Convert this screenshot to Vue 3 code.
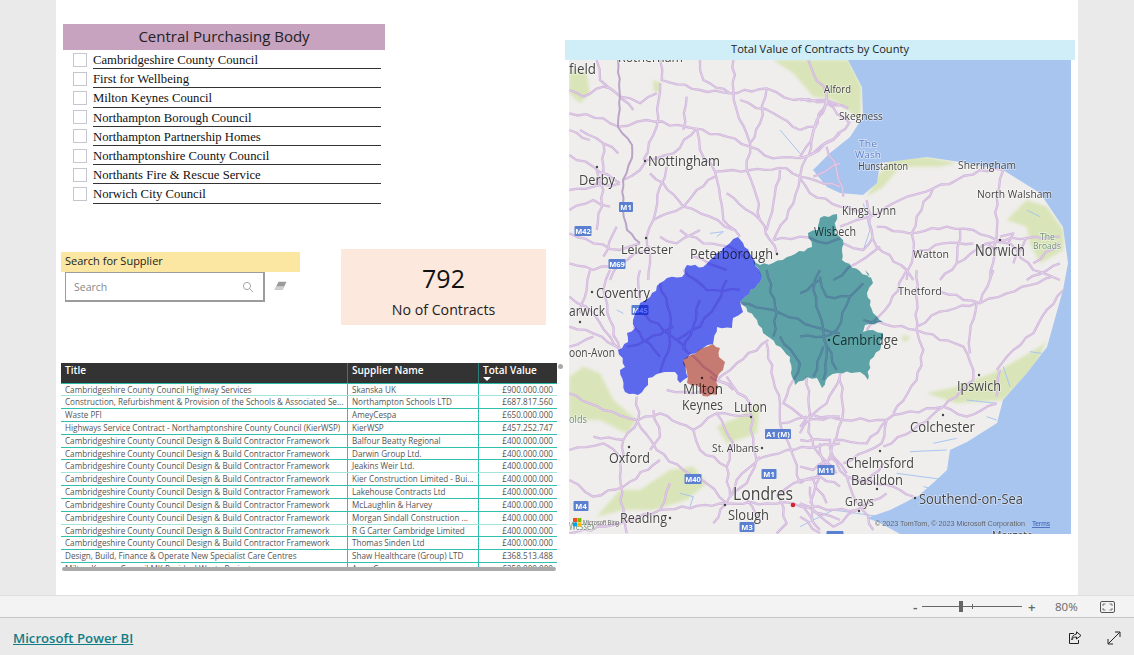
<template>
  <div class="app">
    <div class="stage">
      <main class="canvas">
        <div class="left">
          <section class="slicer">
            <h2 class="slicer-title">Central Purchasing Body</h2>
            <div v-for="body in bodies" :key="body" class="slicer-row">
              <span class="check"></span>
              <span class="slicer-label">{{ body }}</span>
            </div>
          </section>

          <div class="filters">
            <section class="search">
              <div class="search-title">Search for Supplier</div>
              <div class="search-row">
                <div class="search-box">
                  <span>Search</span>
                  <svg width="12" height="12" viewBox="0 0 12 12" fill="none" stroke="#a6a6a6">
                    <circle cx="5" cy="5" r="3.6" />
                    <path d="M7.6 7.6 11 11" />
                  </svg>
                </div>
                <svg class="eraser" width="13" height="10" viewBox="0 0 13 10">
                  <path d="M4.5.8h8L8.6 8.8H.6z" fill="#9a9a9a" />
                  <path d="M2.4 5.2h8L8.6 8.8H.6z" fill="#d0d0d0" />
                </svg>
              </div>
            </section>
            <section class="card">
              <div class="card-value">792</div>
              <div class="card-label">No of Contracts</div>
            </section>
          </div>

          <section class="table">
            <div class="thead">
              <div class="th">Title</div>
              <div class="th">Supplier Name</div>
              <div class="th sorted">Total Value<i class="sort"></i></div>
            </div>
            <div class="tbody">
              <div v-for="(row, i) in rows" :key="i" class="tr" :class="{ pale: i === 0 || i === 6 || i === 10 }">
                <div class="td">{{ row[0] }}</div>
                <div class="td">{{ row[1] }}</div>
                <div class="td num">{{ row[2] }}</div>
              </div>
            </div>
            <div class="scrollbar"></div>
            <i class="grip"></i>
          </section>
        </div>

        <div class="right">
          <div class="map-title">Total Value of Contracts by County</div>
          <svg class="map" width="502" height="474" viewBox="569 60 502 474">
            <defs>
              <filter id="soft" x="0" y="0" width="100%" height="100%">
                <feGaussianBlur stdDeviation="0.3" />
              </filter>
              <filter id="softer" x="-5%" y="-5%" width="110%" height="110%">
                <feGaussianBlur stdDeviation="1.6" />
              </filter>
            </defs>
            <rect x="569" y="60" width="502" height="474" fill="#efeeec" />
            <g filter="url(#softer)">
              <g v-for="group in layers" :key="group.id" :transform="place(group.origin)">
                <polygon v-for="p in group.green" :key="p" :points="p" fill="#d9e4b8" />
              </g>
            </g>
            <g filter="url(#soft)">
              <polygon :points="sea" fill="#a8c5f0" />
              <g v-for="group in layers" :key="group.id + 'w'" :transform="place(group.origin)">
                <polyline v-for="w in group.water" :key="w" :points="w" class="water" />
              </g>
              <g v-for="group in layers" :key="group.id + 'c'" :transform="place(group.origin)">
                <polyline v-for="r in group.roads" :key="r" :points="wavy(r)" class="road" />
              </g>
              <g v-for="group in layers" :key="group.id + 'i'" :transform="place(group.origin)">
                <polyline v-for="r in group.roads" :key="r" :points="wavy(r)" class="road-inner" />
              </g>
              <polyline class="motorway" :points="wavy(motorway, 0.8, 6)" />
            </g>

            <g v-for="s in shields" :key="s[0] + s[1]">
              <rect :x="s[1] - s[3] / 2" :y="s[2] - 5" :width="s[3]" height="10" rx="1" fill="#5b80d2" />
              <text :x="s[1]" :y="s[2] + 3" class="shield">{{ s[0] }}</text>
            </g>

            <circle v-for="d in dots" :key="d[0] + '-' + d[1]" :cx="d[0]" :cy="d[1]" r="1.2" fill="#444" />
            <text
              v-for="l in labels"
              :key="l[0] + l[1]"
              :x="l[1]"
              :y="l[2]"
              :font-size="l[3]"
              :textLength="l[4]"
              :fill="l[5] || '#444'"
              lengthAdjust="spacingAndGlyphs"
              class="place"
            >{{ l[0] }}</text>
            <circle cx="793" cy="505" r="2.3" fill="#d0262c" />

            <polygon :points="jag(northants)" class="region" fill="#6270ff" />
            <polygon :points="jag(cambs)" class="region" fill="#62aeb3" />
            <polygon :points="jag(keynes)" class="region" fill="#d3847b" />

            <g>
              <rect x="573" y="518" width="4" height="4" fill="#f25022" />
              <rect x="577.4" y="518" width="4" height="4" fill="#7fba00" />
              <rect x="573" y="522.4" width="4" height="4" fill="#00a4ef" />
              <rect x="577.4" y="522.4" width="4" height="4" fill="#ffb900" />
              <text x="583" y="525" class="credit" textLength="36" lengthAdjust="spacingAndGlyphs">Microsoft Bing</text>
            </g>
            <text x="875" y="526" class="credit" textLength="150" lengthAdjust="spacingAndGlyphs">© 2023 TomTom, © 2023 Microsoft Corporation</text>
            <text x="1032" y="526" class="credit terms" textLength="18" lengthAdjust="spacingAndGlyphs">Terms</text>
          </svg>
        </div>
      </main>
    </div>

    <div class="zoombar">
      <span class="zoom-sign">-</span>
      <div class="slider"><i class="tick"></i><i class="thumb"></i></div>
      <span class="zoom-sign plus">+</span>
      <span class="zoom-value">80%</span>
      <svg class="fit" width="15" height="12" viewBox="0 0 15 12" fill="none" stroke="#555">
        <rect x=".5" y=".5" width="14" height="11" rx="1.5" />
        <path d="M3 5V3h2.5M12 5V3H9.5M3 7v2h2.5M12 7v2H9.5" stroke-width=".8" />
      </svg>
    </div>

    <footer class="footer">
      <a class="brand">Microsoft Power BI</a>
      <div class="actions">
        <svg width="14" height="14" viewBox="0 0 14 14" fill="none" stroke="#222">
          <path d="M6 2.5H1.5v10h9V9" />
          <path d="M8.5.8 13 4.5 8.5 8V6C6 6 4.5 7 3.8 9 3.8 6 5.5 3.3 8.5 3z" />
        </svg>
        <svg width="14" height="14" viewBox="0 0 14 14" fill="none" stroke="#222">
          <path d="M1.5 12.5 12.5 1.5M8 1h5v5M1 8v5h5" />
        </svg>
      </div>
    </footer>
  </div>
</template>

<script setup>
const bodies = [
  'Cambridgeshire County Council',
  'First for Wellbeing',
  'Milton Keynes Council',
  'Northampton Borough Council',
  'Northampton Partnership Homes',
  'Northamptonshire County Council',
  'Northants Fire & Rescue Service',
  'Norwich City Council'
]

const framework = 'Cambridgeshire County Council Design & Build Contractor Framework'
const rows = [
  ['Cambridgeshire County Council Highway Services', 'Skanska UK', '£900.000.000'],
  ['Construction, Refurbishment & Provision of the Schools & Associated Se...', 'Northampton Schools LTD', '£687.817.560'],
  ['Waste PFI', 'AmeyCespa', '£650.000.000'],
  ['Highways Service Contract - Northamptonshire County Council (KierWSP)', 'KierWSP', '£457.252.747'],
  [framework, 'Balfour Beatty Regional', '£400.000.000'],
  [framework, 'Darwin Group Ltd.', '£400.000.000'],
  [framework, 'Jeakins Weir Ltd.', '£400.000.000'],
  [framework, 'Kier Construction Limited - Bui...', '£400.000.000'],
  [framework, 'Lakehouse Contracts Ltd', '£400.000.000'],
  [framework, 'McLaughlin & Harvey', '£400.000.000'],
  [framework, 'Morgan Sindall Construction ...', '£400.000.000'],
  [framework, 'R G Carter Cambridge Limited', '£400.000.000'],
  [framework, 'Thomas Sinden Ltd', '£400.000.000'],
  ['Design, Build, Finance & Operate New Specialist Care Centres', 'Shaw Healthcare (Group) LTD', '£368.513.488'],
  ['Milton Keynes Council MK Residual Waste Project', 'AmeyCespa', '£350.000.000']
]

// map traced in 3x crop coordinates, one group per crop
const place = ([x, y]) => `translate(${x} ${y}) scale(${1 / 3})`

// splits each edge and pushes the new points sideways, so traced lines don't look ruled
const bend = (str, step, amp) => {
  const pts = str.split(' ').map((p) => p.split(',').map(Number))
  const out = []
  pts.forEach(([x, y], i) => {
    out.push(`${x},${y}`)
    if (i === pts.length - 1) return
    const [nx, ny] = pts[i + 1]
    const len = Math.hypot(nx - x, ny - y)
    const n = Math.floor(len / step)
    for (let k = 1; k < n; k++) {
      const t = k / n
      const off = Math.sin((x + y) * 0.7 + k * 2.4) * amp * Math.sin(t * Math.PI)
      out.push(`${(x + (nx - x) * t - ((ny - y) / len) * off).toFixed(1)},${(y + (ny - y) * t + ((nx - x) / len) * off).toFixed(1)}`)
    }
  })
  return out.join(' ')
}
const wavy = (str, amp = 5, step = 22) => bend(str, step, amp)
const jag = (str) => {
  const closed = `${str} ${str.split(' ')[0]}`
  return bend(closed, 4, 1.3)
}

const motorway = '618,60 620,97 618,127 632,145 632,158 623,180 623,210 627,230 640,243'

const layers = [
  {
    id: 'nw',
    origin: [560, 30],
    green: [
      '28,120 80,130 90,190 60,220 28,190',
      '640,90 840,90 840,210 760,200 700,130',
      '280,150 305,160 295,190 280,180'
    ],
    water: ['450,610 490,605 470,620', '660,300 720,370'],
    roads: [
      '110,90 120,150 170,190 220,240',
      '28,375 100,410 180,460',
      '28,250 130,265 175,290 260,270 400,295 500,320 570,350 640,385 740,380 840,310',
      '300,90 305,150 420,180 510,190 620,175 700,210 800,210 840,225',
      '420,90 430,150 510,190',
      '520,90 520,180 530,240 570,340 560,420 590,500 600,570 630,630 650,670',
      '300,160 290,290 250,390',
      '410,295 340,370 260,390 240,420 190,450',
      '410,295 420,360 465,425 480,500 490,570 540,620',
      '465,425 570,420 680,415 720,440 840,470',
      '270,430 310,460 370,530 450,560 520,600',
      '320,410 300,470 280,570 260,620',
      '465,440 410,480 370,530 280,570',
      '740,380 720,440 700,520 640,630',
      '28,480 100,470 180,460',
      '28,610 100,640 180,660 240,640',
      '260,620 270,700 265,750',
      '130,340 130,430 100,470',
      '28,700 100,720 180,700 270,650',
      '640,630 720,620 800,640 840,625',
      '800,210 760,300 745,380',
      '110,420 130,480 110,600',
      '150,750 180,700',
      '28,180 70,200 130,170 170,190',
      '360,600 430,640 510,650 560,690',
      '400,680 500,720',
      '180,200 240,220 290,190',
      '60,300 130,340 175,370',
      '28,300 90,330',
      '380,200 370,300',
      '620,175 600,280 570,340',
      '660,420 640,520 620,600',
      '500,490 600,570',
      '760,440 840,400',
      '420,600 350,640 300,620',
      '170,590 130,680',
      '540,210 640,250 720,300',
      '28,540 100,510 150,530'
    ]
  },
  {
    id: 'ne',
    origin: [800, 30],
    green: [
      '40,90 145,90 185,170 180,270 130,230 70,190',
      '200,500 240,430 270,385 380,380 470,400 420,410 300,410 250,470',
      '620,570 680,510 740,530 790,600 790,660 720,700 690,640 680,590'
    ],
    water: ['190,520 210,600 190,660', '680,540 720,560'],
    roads: [
      '25,90 40,130 80,190 80,220 150,280',
      '0,210 80,215 145,235',
      '80,220 50,270 35,330 0,380',
      '150,275 100,330 30,375 0,385',
      '0,445 30,490 120,530 190,545',
      '200,510 215,600 230,650 320,720 340,750',
      '120,590 170,570 210,560 300,510 400,475 470,450 540,420 610,420',
      '400,475 350,560 335,610 340,670 320,750',
      '230,590 330,610 440,590 520,600 590,630 680,625 780,620',
      '610,420 590,500 590,620 570,750',
      '130,640 190,660 220,620',
      '600,620 640,610 625,640 560,640 590,660',
      '560,640 470,700 420,750',
      '630,640 700,720 780,750',
      '680,750 780,700',
      '640,700 680,620',
      '340,670 430,640 520,640',
      '240,650 170,700 100,750',
      '480,600 470,700',
      '700,700 780,640',
      '0,300 50,290',
      '80,350 110,420 130,500'
    ]
  },
  {
    id: 'sw',
    origin: [560, 270],
    green: [
      '28,320 70,290 120,310 160,390 230,450 200,490 120,450 28,450',
      '240,660 330,600 400,590 440,640 380,690 280,720 190,720 110,740 180,660',
      '470,470 540,440 600,400 590,490 500,520'
    ],
    water: ['360,670 400,680 390,710', '170,120 190,130'],
    roads: [
      '28,80 100,130 150,200 180,240',
      '28,370 130,420 230,450 290,540 370,600 440,640 500,700',
      '230,380 235,450 190,510 180,620 190,740 200,790',
      '235,450 300,430 400,480 470,430 580,440',
      '400,480 420,540 500,590 510,680 460,760',
      '500,320 520,350 570,400 580,530 590,570',
      '625,210 530,280 470,330',
      '620,220 640,330 660,400 660,460 700,560',
      '700,330 670,400 740,450 840,440',
      '740,440 760,530 830,610',
      '450,320 520,350 570,400',
      '28,630 100,680 190,650 300,570',
      '28,790 180,760 300,720 500,700 620,700 700,700 840,750',
      '590,570 680,540 840,520',
      '600,560 530,630 510,680',
      '650,680 700,640 780,620 840,650',
      '660,690 680,760 650,790',
      '720,700 780,780',
      '150,0 130,60 150,150 180,240',
      '240,0 235,50 240,90',
      '90,0 80,60 60,130',
      '28,170 100,190 170,230',
      '320,360 400,370 450,350',
      '28,230 100,200',
      '280,420 300,500 270,540',
      '470,430 520,520 500,590',
      '330,640 300,720',
      '100,500 190,510',
      '590,570 560,640 510,680',
      '660,460 740,440',
      '700,560 720,640',
      '780,520 790,600',
      '28,540 130,520 180,560',
      '840,320 800,400 740,450',
      '560,690 600,750',
      '760,630 800,700',
      // inside the county shapes
      '235,120 350,210 430,290 520,360',
      '300,40 330,130 330,220 300,310',
      '420,90 400,170 370,240',
      '500,30 470,100 420,170 350,210',
      '220,170 300,260',
      '540,60 440,60 370,0',
      '200,230 260,210 340,170',
      '620,0 650,130 640,200',
      '540,100 640,120 760,170 840,190',
      '780,0 760,60 790,180 800,260 790,330',
      '660,200 720,280 700,330',
      '790,230 760,320'
    ]
  },
  {
    id: 'se',
    origin: [800, 270],
    green: [
      '380,370 470,350 600,300 720,230 740,210 700,300 610,390 470,400',
      '310,195 330,200 320,215 305,210'
    ],
    water: [
      '500,390 590,400',
      '610,290 630,350',
      '690,245 725,250',
      '560,440 590,450',
      '330,545 440,540',
      '400,520 470,505',
      '0,770 100,720 240,740 350,680',
      '290,610 440,630',
      '370,650 420,660'
    ],
    roads: [
      '320,0 270,100 200,180',
      '190,150 350,180 490,230 520,300 520,330',
      '350,0 350,180 370,240 350,330 280,430',
      '420,65 540,100 620,70 760,20',
      '350,170 420,125 530,100 510,190 510,250',
      '540,100 580,0',
      '590,300 640,240 700,190 740,120 790,60',
      '520,330 430,410 280,435 260,450 130,450 40,435 0,470',
      '430,410 500,440 590,400',
      '260,450 245,520 130,580',
      '250,530 340,480 430,410',
      '120,310 130,420 110,500 90,560 140,620 170,700',
      '20,320 30,430 0,490',
      '0,510 90,510 100,560 140,610',
      '140,620 280,650 340,680',
      '0,640 50,620 90,560',
      '0,700 80,720 170,720 260,670',
      '30,650 40,760',
      '0,740 60,790',
      '590,380 600,300',
      '100,560 40,600 0,590',
      '260,450 200,520 100,510',
      '250,580 200,640 140,620',
      '60,620 30,700',
      '40,720 100,770 170,720',
      '180,700 220,780',
      // inside Cambridgeshire
      '0,200 70,200 110,300',
      '60,20 80,80 150,80 190,40',
      '0,70 60,30',
      '150,80 110,180 70,200'
    ]
  }
]

const sea = '848,60 862,87 863,117 850,137 830,153 813,170 827,187 840,193 863,195 877,183 880,163 927,157 960,162 1003,170 1040,193 1063,227 1068,263 1063,290 1047,347 1027,373 1003,400 997,423 967,442 950,450 947,470 933,483 917,497 890,510 867,518 880,523 900,534 1071,534 1071,60'
const northants = '738,237 743,243 752,257 762,277 760,282 740,302 743,312 733,318 732,328 717,327 713,344 703,348 683,360 688,377 680,383 675,372 660,373 648,378 648,385 638,395 625,392 620,370 625,367 618,350 628,342 627,333 635,328 633,320 640,303 650,297 660,283 667,278 682,277 687,265 703,267 710,260 730,243'
const cambs = '837,214 820,218 818,230 808,233 812,247 787,257 773,263 760,265 753,260 762,277 760,282 740,302 757,320 763,333 770,338 790,357 792,377 795,385 807,377 817,378 822,388 828,377 838,373 860,372 868,380 870,360 880,350 883,333 873,330 863,332 865,325 883,322 873,313 867,293 873,283 865,270 870,278 842,260 843,240 835,233'
const keynes = '713,344 720,348 719,357 725,362 723,370 717,378 717,395 703,396 700,387 687,383 688,377 683,360 703,348'

// text, x, y, width
const shields = [
  ['M1', 626, 207, 14],
  ['M42', 583, 231, 17],
  ['M69', 617, 264, 17],
  ['M45', 640, 310, 17],
  ['A1 (M)', 778, 434, 26],
  ['M1', 769, 474, 15],
  ['M11', 826, 470, 17],
  ['M40', 693, 479, 17],
  ['M4', 581, 506, 15],
  ['M3', 747, 527, 15],
  ['M2', 835, 536, 17]
]

const dots = [
  [645, 161], [597, 167], [646, 238], [777, 254], [592, 292], [580, 322],
  [702, 378], [751, 417], [629, 447], [762, 448], [725, 505], [670, 518],
  [829, 340], [979, 375], [943, 415], [880, 451], [877, 489], [859, 511],
  [915, 498], [1000, 240]
]

const green = '#6f8f75'
// text, x, baseline, size, width, colour
const labels = [
  ['Rotherham', 618, 62, 13, 65],
  ['field', 569, 74, 15, 27],
  ['Alford', 824, 93, 10, 27],
  ['Skegness', 839, 120, 11.5, 44],
  ['The', 859, 147, 9.5, 18, '#5f7fc4'],
  ['Wash', 855, 157.5, 9.5, 26, '#5f7fc4'],
  ['Hunstanton', 858, 170, 10, 50],
  ['Sheringham', 958, 169, 11.5, 58],
  ['North Walsham', 977, 198, 11.5, 75],
  ['Kings Lynn', 842, 215, 12, 54],
  ['Wisbech', 814, 236, 12, 42],
  ['Watton', 913, 258, 11.5, 36],
  ['Norwich', 975, 256, 15.5, 50],
  ['The', 1040, 240, 8.5, 15, green],
  ['Broads', 1033, 249, 8.5, 28, green],
  ['Nottingham', 648, 166, 14, 72],
  ['Derby', 579, 185, 14, 36],
  ['Leicester', 621, 254, 13, 52],
  ['Peterborough', 690, 259, 14, 83],
  ['Coventry', 596, 298, 14, 54],
  ['arwick', 569, 316, 14, 36],
  ['oon-Avon', 569, 357, 12, 46],
  ['Thetford', 898, 295, 11, 44],
  ['Cambridge', 832, 345, 14, 66],
  ['Ipswich', 957, 391, 14, 44],
  ['Colchester', 910, 432, 14, 65],
  ['Chelmsford', 846, 468, 14, 68],
  ['Basildon', 851, 485, 14, 52],
  ['Grays', 845, 506, 12, 29],
  ['Southend-on-Sea', 919, 504, 14, 104],
  ['Margate', 992, 540, 13, 41],
  ['Milton', 683, 394, 14, 40],
  ['Keynes', 682, 410, 14, 41],
  ['Luton', 734, 412, 14, 33],
  ['Oxford', 609, 463, 14, 41],
  ['St. Albans', 712, 452, 11.5, 47],
  ['Londres', 733, 500, 18, 60],
  ['Slough', 728, 520, 14, 41],
  ['Reading', 620, 523, 14, 47],
  ['olds', 569, 423, 10, 18, green],
  ['Wessex', 569, 530, 10, 26, green]
]
</script>

<style scoped>
.app {
  width: 100vw;
  height: 100vh;
  display: flex;
  flex-direction: column;
  overflow: hidden;
  background: #eaeaea;
  font-family: "Open Sans", "Noto Sans", sans-serif;
}

.stage {
  height: 595px;
  padding-left: 56px;
  flex-shrink: 0;
}

.canvas {
  width: 1022px;
  height: 595px;
  background: #fff;
  display: flex;
}

.left {
  width: 509px;
  padding-left: 5px;
  box-sizing: border-box;
}

.slicer {
  width: 322px;
  margin: 24px 0 0 2px;
  padding-bottom: 1px;
}

.slicer-title {
  margin: 0;
  height: 26px;
  line-height: 25px;
  text-align: center;
  background: #c8a3c0;
  color: #222;
  font-size: 15px;
  font-weight: 400;
}

.slicer-row {
  display: flex;
  align-items: center;
  height: 19.2px;
  padding-left: 10px;
}

.check {
  width: 12px;
  height: 12px;
  border: 1px solid #c6c6d0;
  margin-right: 6px;
  flex-shrink: 0;
}

.slicer-label {
  width: 288px;
  height: 19.2px;
  line-height: 20px;
  box-sizing: border-box;
  border-bottom: 1px solid #333;
  font-family: "Liberation Serif", serif;
  font-size: 12.7px;
  color: #111;
  white-space: nowrap;
}

.filters {
  display: flex;
  align-items: flex-start;
  gap: 41px;
  margin-top: 44px;
}

.search {
  width: 239px;
  margin-top: 3px;
}

.search-title {
  height: 20px;
  line-height: 18px;
  padding-left: 4px;
  background: #fbe7a1;
  font-size: 11px;
  color: #222;
}

.search-row {
  display: flex;
  align-items: center;
  padding-left: 4px;
}

.search-box {
  width: 200px;
  height: 30px;
  box-sizing: border-box;
  border: 1px solid #9c9c9c;
  border-width: 1px 2px 2px 1px;
  display: flex;
  align-items: center;
  justify-content: space-between;
  padding: 2px 9px 0 8px;
  font-size: 10.5px;
  color: #888;
}

.eraser {
  margin-left: 9px;
  margin-bottom: 1px;
}

.card {
  width: 205px;
  height: 76px;
  background: #fde8de;
  text-align: center;
  color: #111;
}

.card-value {
  font-size: 25px;
  line-height: 28px;
  padding-top: 15px;
  font-weight: 500;
}

.card-label {
  font-size: 14.2px;
  line-height: 20px;
  margin-top: 8px;
  color: #222;
}

.table {
  position: relative;
  width: 496px;
  margin-top: 38px;
}

.thead,
.tr {
  display: grid;
  grid-template-columns: 287px 131px 78px;
}

.thead {
  height: 21px;
  background: #333;
  border-bottom: 1px solid #27b9a9;
  box-sizing: border-box;
  color: #fff;
  font-size: 10px;
  font-weight: 600;
}

.th {
  position: relative;
  padding: 1px 0 0 4px;
  line-height: 13px;
  border-right: 1px solid #2a7f78;
}

.sorted {
  border-right: none;
}

.sort {
  position: absolute;
  left: 4px;
  top: 14px;
  border: 4px solid transparent;
  border-top: 4px solid #fff;
  border-bottom: none;
}

.tbody {
  height: 183px;
  overflow: hidden;
}

.tr {
  height: 12.83px;
  box-sizing: border-box;
  border-bottom: 1px solid #2fc0b0;
  font-size: 8.15px;
  line-height: 12px;
  color: #555;
}

.tr.pale {
  border-bottom-color: #a2e3dc;
}

.td {
  padding-left: 4px;
  white-space: nowrap;
  overflow: hidden;
  border-right: 1px solid #2fc0b0;
}

.td.num {
  text-align: right;
  padding-right: 4px;
  border-right: none;
}

.scrollbar {
  height: 4px;
  width: 494px;
  margin-left: 1px;
  border-radius: 2px;
  background: #aaa;
}

.grip {
  position: absolute;
  left: 497px;
  top: 1px;
  width: 5px;
  height: 5px;
  border-radius: 50%;
  background: #aaa;
}

.right {
  padding: 40px 0 0 0;
}

.map-title {
  width: 510px;
  height: 20px;
  line-height: 17px;
  background: #cfeef7;
  text-align: center;
  font-size: 11.1px;
  color: #222;
}

.map {
  display: block;
  margin-left: 4px;
}

.water {
  fill: none;
  stroke: #a8c5f0;
  stroke-width: 3;
}

.road {
  fill: none;
  stroke: #d0b4dc;
  stroke-width: 7;
  stroke-linejoin: round;
}

.road-inner {
  fill: none;
  stroke: #e9dcec;
  stroke-width: 2;
  stroke-linejoin: round;
}

.motorway {
  fill: none;
  stroke: #bba4c8;
  stroke-width: 2;
}

.place {
  font-family: "Open Sans", sans-serif;
  paint-order: stroke;
  stroke: rgba(255, 255, 255, 0.5);
  stroke-width: 1.5px;
}

.shield {
  font-family: "Open Sans", sans-serif;
  font-size: 7.5px;
  font-weight: 700;
  text-anchor: middle;
  fill: #fff;
}

.region {
  mix-blend-mode: multiply;
  stroke: none;
}

.credit {
  font-family: "Liberation Sans", sans-serif;
  font-size: 7.5px;
  fill: #666;
}

.terms {
  fill: #3558b0;
  text-decoration: underline;
}

.zoombar {
  height: 23px;
  box-sizing: border-box;
  background: #f3f3f3;
  border-top: 1px solid #dedede;
  border-bottom: 1px solid #c6c6c6;
  display: flex;
  align-items: center;
  padding-left: 913px;
  color: #666;
}

.zoom-sign {
  width: 9px;
  font-size: 14px;
  line-height: 20px;
  font-weight: 600;
}

.slider {
  position: relative;
  width: 100px;
  height: 1px;
  background: #666;
}

.tick {
  position: absolute;
  left: 50px;
  top: -2px;
  width: 1px;
  height: 5px;
  background: #666;
}

.thumb {
  position: absolute;
  left: 37px;
  top: -5px;
  width: 4px;
  height: 11px;
  background: #666;
}

.plus {
  margin-left: 6px;
  font-size: 13px;
}

.zoom-value {
  margin-left: 18px;
  width: 45px;
  font-size: 11.5px;
}

.footer {
  flex: 1;
  display: flex;
  align-items: center;
  justify-content: space-between;
  padding: 3px 13px 0;
}

.brand {
  color: #117d85;
  font-size: 13.2px;
  font-weight: 600;
  text-decoration: underline;
}

.actions {
  display: flex;
  gap: 25px;
}
</style>
